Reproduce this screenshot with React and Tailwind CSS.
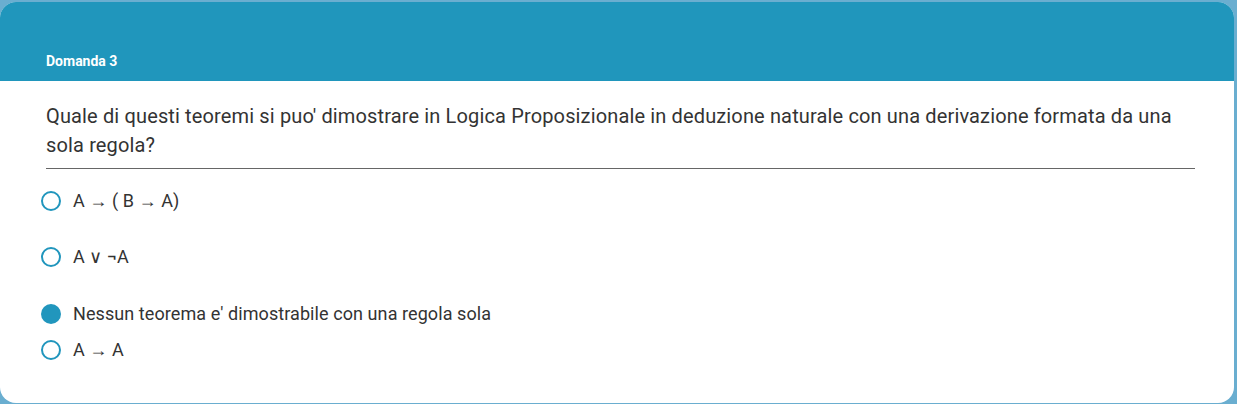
import React from 'react';

const options = [
  { label: 'A → ( B → A)', selected: false, cls: 'h-[26px] mb-[30px]' },
  { label: 'A ∨ ¬A', selected: false, cls: 'h-[26px] mb-[31px]' },
  { label: "Nessun teorema e' dimostrabile con una regola sola", selected: true, cls: 'h-[26px] mb-[10px]' },
  { label: 'A → A', selected: false, cls: 'h-[26px]' },
];

function Radio({ selected }) {
  if (selected) return <span className="w-[20px] h-[20px] rounded-full bg-[#2196bd] shrink-0" />;
  return <span className="w-[20px] h-[20px] rounded-full border-[2.5px] border-[#2196bd] bg-white shrink-0" />;
}

export default function App() {
  return (
    <div className="w-[1237px] h-[404px] bg-[#6aaed0] pt-[2px] pr-[3px] pb-[1px] overflow-hidden" style={{ fontFamily: 'Roboto, "Liberation Sans", sans-serif' }}>
      <div className="h-full rounded-[16px] bg-white overflow-hidden flex flex-col">
        {/* header */}
        <div className="h-[79px] bg-[#2096bc] flex items-end pl-[46px] pb-[11px] shrink-0">
          <span className="text-white text-[14px] font-bold leading-[18px]">Domanda 3</span>
        </div>

        <div className="pl-[46px] pr-[39px] pt-[21px]">
          <p className="text-[20px] leading-[29px] tracking-[0.14px] text-[#333] pr-[10px]">
            Quale di questi teoremi si puo' dimostrare in Logica Proposizionale in deduzione naturale con una derivazione formata da una sola regola?
          </p>
          <div className="mt-[8px] h-px bg-[#666]" />

          <div className="mt-[19px] flex flex-col">
            {options.map((o) => (
              <div key={o.label} className={`flex items-center gap-[12px] -ml-[5px] ${o.cls}`}>
                <Radio selected={o.selected} />
                <span className="text-[18px] text-[#333] leading-[26px] tracking-[0.08px]">{o.label}</span>
              </div>
            ))}
          </div>
        </div>
      </div>
    </div>
  );
}
